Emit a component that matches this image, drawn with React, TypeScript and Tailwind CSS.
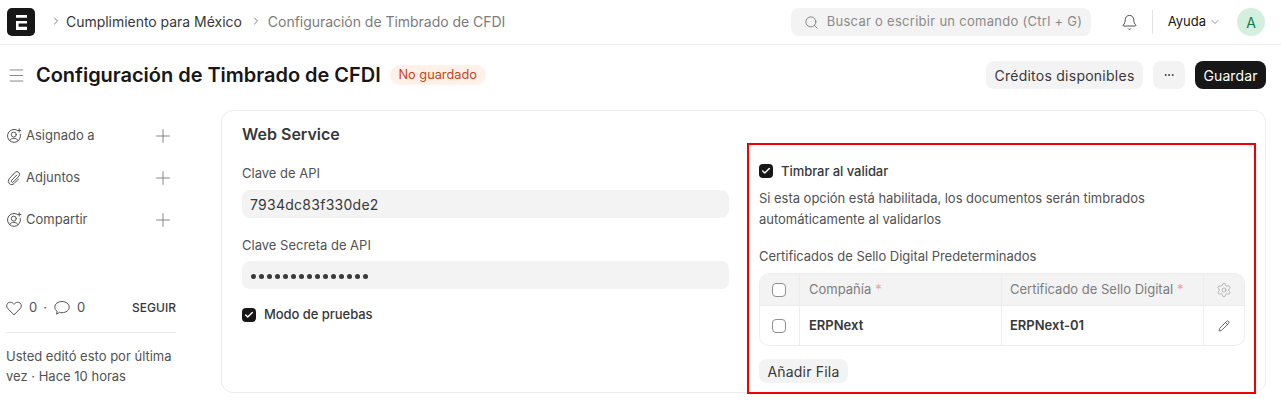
import React from 'react';
import { Search, Bell, ChevronDown, ChevronRight, Menu, Plus, Settings, Pencil, Check, MoreHorizontal } from 'lucide-react';

function UserAdd() {
  return (
    <svg width="16" height="16" viewBox="0 0 16 16" fill="none" stroke="#525252" strokeWidth="1" strokeLinecap="round" className="shrink-0">
      <path d="M10.6 1.9A6.5 6.5 0 1 0 14.3 6.2" />
      <circle cx="7.8" cy="6.6" r="2.5" />
      <path d="M3.6 12.6C4.4 10.9 6 10.4 7.8 10.4C9.6 10.4 11.2 10.9 12 12.6" />
      <path d="M13.2 0.8V4.2M11.5 2.5H14.9" />
    </svg>
  );
}

function Clip() {
  return (
    <svg width="16" height="16" viewBox="0 0 16 16" fill="none" stroke="#525252" strokeWidth="1" strokeLinecap="round" className="shrink-0">
      <path d="M10.8 5L5.6 10.3A1.2 1.2 0 0 0 7.3 12L13 6.1A2.7 2.7 0 0 0 9.2 2.3L3.3 8.5A4.1 4.1 0 0 0 3.6 14C5 15 6.7 14.8 8 13.6L12.6 9" />
    </svg>
  );
}

function SideItem({ icon, label }: { icon: React.ReactNode; label: string }) {
  return (
    <div className="h-[42px] flex items-center justify-between pr-[2px]">
      <div className="flex items-center gap-[4px] text-[13px] text-[#525252]">
        {icon}
        <span>{label}</span>
      </div>
      <Plus className="w-[22px] h-[22px] mb-[1px] text-[#7c7c7c]" strokeWidth={1} />
    </div>
  );
}

function CheckBox({ checked }: { checked?: boolean }) {
  if (checked) {
    return (
      <span className="w-[14px] h-[14px] rounded-[4px] bg-[#171717] flex items-center justify-center shrink-0">
        <Check className="w-[10px] h-[10px] text-white" strokeWidth={3.5} />
      </span>
    );
  }
  return <span className="w-[14px] h-[14px] rounded-[4px] border border-[#8f8f8f] bg-white shrink-0" />;
}

export default function App() {
  return (
    <div className="w-[1281px] h-[405px] overflow-hidden bg-white text-[#171717] font-['Inter',sans-serif]">
      <header className="h-[45px] border-b border-[#ededed] flex items-center pl-[7px] pr-[16px]">
        <div className="w-[28px] h-[28px] rounded-[5px] bg-[#171717] flex items-center justify-center">
          <svg width="11" height="15" viewBox="0 0 11 15" fill="none">
            <path d="M0 0H11V2.8H0Z M0 6H11V8.4H2.6V11.8H11V15H0Z" fill="white" />
          </svg>
        </div>
        <div className="flex items-center ml-[15px] mb-[2px] text-[14px] tracking-[-0.03px]">
          <ChevronRight className="w-[12px] h-[12px] text-[#525252]" strokeWidth={1.5} />
          <span className="ml-[4px] text-[#383838]">Cumplimiento para México</span>
          <ChevronRight className="w-[12px] h-[12px] ml-[8px] text-[#525252]" strokeWidth={1.5} />
          <span className="ml-[6px] text-[#7c7c7c]">Configuración de Timbrado de CFDI</span>
        </div>
        <div className="ml-auto w-[300px] h-[28px] rounded-[8px] bg-[#f3f3f3] flex items-center pl-[13px]">
          <Search className="w-[15px] h-[15px] text-[#6b6b6b]" strokeWidth={1.25} />
          <span className="ml-[8px] text-[13px] tracking-[0.28px] text-[#8a8a8a]">Buscar o escribir un comando (Ctrl + G)</span>
        </div>
        <Bell className="w-[17px] h-[17px] ml-[30px] text-[#383838]" strokeWidth={1.25} />
        <div className="w-px h-[24px] bg-[#e2e2e2] ml-[14px]" />
        <span className="ml-[15px] text-[13px] text-[#171717]">Ayuda</span>
        <ChevronDown className="w-[12px] h-[12px] ml-[3px] text-[#525252]" strokeWidth={1.25} />
        <div className="w-[28px] h-[28px] rounded-full bg-[#d5efdf] text-[#137a4a] text-[14px] flex items-center justify-center ml-[16px]">A</div>
      </header>

      <div className="h-[65px] pb-[5px] flex items-center pl-[7px] pr-[15px]">
        <Menu className="w-[19px] h-[19px] text-[#6b6b6b]" strokeWidth={1} />
        <h1 className="ml-[10px] text-[20px] font-semibold tracking-[-0.03px] text-[#171717]">Configuración de Timbrado de CFDI</h1>
        <span className="ml-[9px] h-[20px] w-[96px] rounded-[10px] bg-[#fff0e8] text-[#c8431c] text-[12.75px] flex items-center justify-center">No guardado</span>
        <button className="ml-auto h-[28px] w-[157px] rounded-[8px] bg-[#f3f3f3] text-[14px] tracking-[0.25px] text-[#383838]">Créditos disponibles</button>
        <button className="ml-[10px] w-[32px] h-[28px] rounded-[8px] bg-[#f3f3f3] flex items-center justify-center">
          <MoreHorizontal className="w-[12px] h-[12px] text-[#383838]" strokeWidth={2} />
        </button>
        <button className="ml-[10px] w-[71px] h-[28px] rounded-[8px] bg-[#171717] text-white text-[14px] tracking-[0.1px]">Guardar</button>
      </div>

      <div className="flex pl-[6px] pr-[15px]">
        <aside className="w-[170px] shrink-0 pt-[5px]">
          <SideItem icon={<UserAdd />} label="Asignado a" />
          <SideItem icon={<Clip />} label="Adjuntos" />
          <SideItem icon={<UserAdd />} label="Compartir" />
          <div className="mt-[57px] flex items-center justify-between h-[20px] text-[13px] text-[#525252]">
            <div className="flex items-center">
              <svg width="16" height="15" viewBox="0 0 16 15" fill="none" stroke="#525252" strokeWidth="1" strokeLinejoin="round">
                <path d="M8 13.8L2 7.9C0.2 6.1 0.3 3.6 1.9 2.1C3.5 0.7 6.1 0.9 8 3.3C9.9 0.9 12.5 0.7 14.1 2.1C15.7 3.6 15.8 6.1 14 7.9Z" />
              </svg>
              <span className="ml-[7px]">0</span>
              <span className="ml-[6px] mr-[7px]">·</span>
              <svg width="16" height="16" viewBox="0 0 16 16" fill="none" stroke="#525252" strokeWidth="1" strokeLinejoin="round">
                <path d="M8 1.5C4 1.5 0.8 3.9 0.8 7.1C0.8 8.8 1.7 10.3 3.1 11.3L2.6 14.2L5.5 12.3C6.3 12.6 7.1 12.7 8 12.7C12 12.7 15.2 10.3 15.2 7.1C15.2 3.9 12 1.5 8 1.5Z" />
              </svg>
              <span className="ml-[7px]">0</span>
            </div>
            <span className="text-[12px] font-medium text-[#383838] mb-[1px]">SEGUIR</span>
          </div>
          <div className="h-px bg-[#e8e8e8] mt-[14px]" />
          <p className="mt-[13px] text-[13px] leading-[20px] text-[#525252]">Usted editó esto por última vez · Hace 10 horas</p>
        </aside>

        <main className="ml-[45px] w-[1045px] h-[283px] rounded-[12px] border border-[#ededed] flex">
          <section className="w-[507px] pl-[20px] shrink-0">
            <h2 className="mt-[13px] text-[16px] leading-[20px] font-semibold text-[#383838]">Web Service</h2>
            <label className="block mt-[21px] text-[13px] leading-[16px] text-[#525252]">Clave de API</label>
            <div className="mt-[9px] h-[28px] rounded-[8px] bg-[#f3f3f3] flex items-center px-[8px] text-[14px] tracking-[0.27px] text-[#383838]">7934dc83f330de2</div>
            <label className="block mt-[19px] text-[13px] leading-[16px] text-[#525252]">Clave Secreta de API</label>
            <div className="mt-[8px] h-[28px] pt-[2px] rounded-[8px] bg-[#f3f3f3] flex items-center gap-[3px] px-[9px]">
              {Array.from({ length: 15 }).map((_, i) => (
                <span key={i} className="w-[5px] h-[5px] rounded-full bg-[#383838]" />
              ))}
            </div>
            <div className="mt-[16px] flex items-center gap-[8px]">
              <CheckBox checked />
              <span className="text-[13px] font-medium tracking-[-0.05px] text-[#383838]">Modo de pruebas</span>
            </div>
          </section>

          <section className="ml-[18px] mt-[32px] w-[509px] h-[251px] border-2 border-[#f00000] px-[10px] shrink-0">
            <div className="mt-[18px] flex items-center gap-[8px]">
              <CheckBox checked />
              <span className="text-[13px] font-medium tracking-[-0.05px] text-[#383838] leading-[16px]">Timbrar al validar</span>
            </div>
            <p className="mt-[9px] text-[13px] leading-[21px] tracking-[-0.03px] text-[#525252]">Si esta opción está habilitada, los documentos serán timbrados<br />automáticamente al validarlos</p>
            <div className="mt-[18px] text-[13px] leading-[16px] tracking-[-0.03px] text-[#525252]">Certificados de Sello Digital Predeterminados</div>
            <div className="mt-[9px] w-[486px] rounded-[10px] border border-[#ededed] overflow-hidden">
              <div className="flex h-[32px] bg-[#f3f3f3] text-[13px] text-[#7c7c7c] border-b border-[#ededed]">
                <div className="w-[40px] pr-[2px] flex items-center justify-center border-r border-[#ededed]"><CheckBox /></div>
                <div className="w-[202px] flex items-center pl-[9px] border-r border-[#ededed]">Compañía<span className="ml-[4px] text-[#f3a0a0]">*</span></div>
                <div className="w-[202px] flex items-center pl-[8px] border-r border-[#ededed]">Certificado de Sello Digital<span className="ml-[4px] text-[#f3a0a0]">*</span></div>
                <div className="flex-1 flex items-center justify-center"><Settings className="w-[16px] h-[16px] text-[#9a9a9a]" strokeWidth={1} /></div>
              </div>
              <div className="flex h-[39px] text-[13px] font-semibold text-[#383838]">
                <div className="w-[40px] pr-[2px] flex items-center justify-center border-r border-[#ededed]"><CheckBox /></div>
                <div className="w-[202px] flex items-center pl-[9px] border-r border-[#ededed]">ERPNext</div>
                <div className="w-[202px] flex items-center pl-[8px] border-r border-[#ededed]">ERPNext-01</div>
                <div className="flex-1 flex items-center justify-center"><Pencil className="w-[12px] h-[12px] text-[#171717]" strokeWidth={1.25} /></div>
              </div>
            </div>
            <button className="mt-[13px] h-[24px] w-[89px] rounded-[8px] bg-[#f3f3f3] text-[14px] tracking-[0.2px] text-[#383838]">Añadir Fila</button>
          </section>
        </main>
      </div>
    </div>
  );
}
